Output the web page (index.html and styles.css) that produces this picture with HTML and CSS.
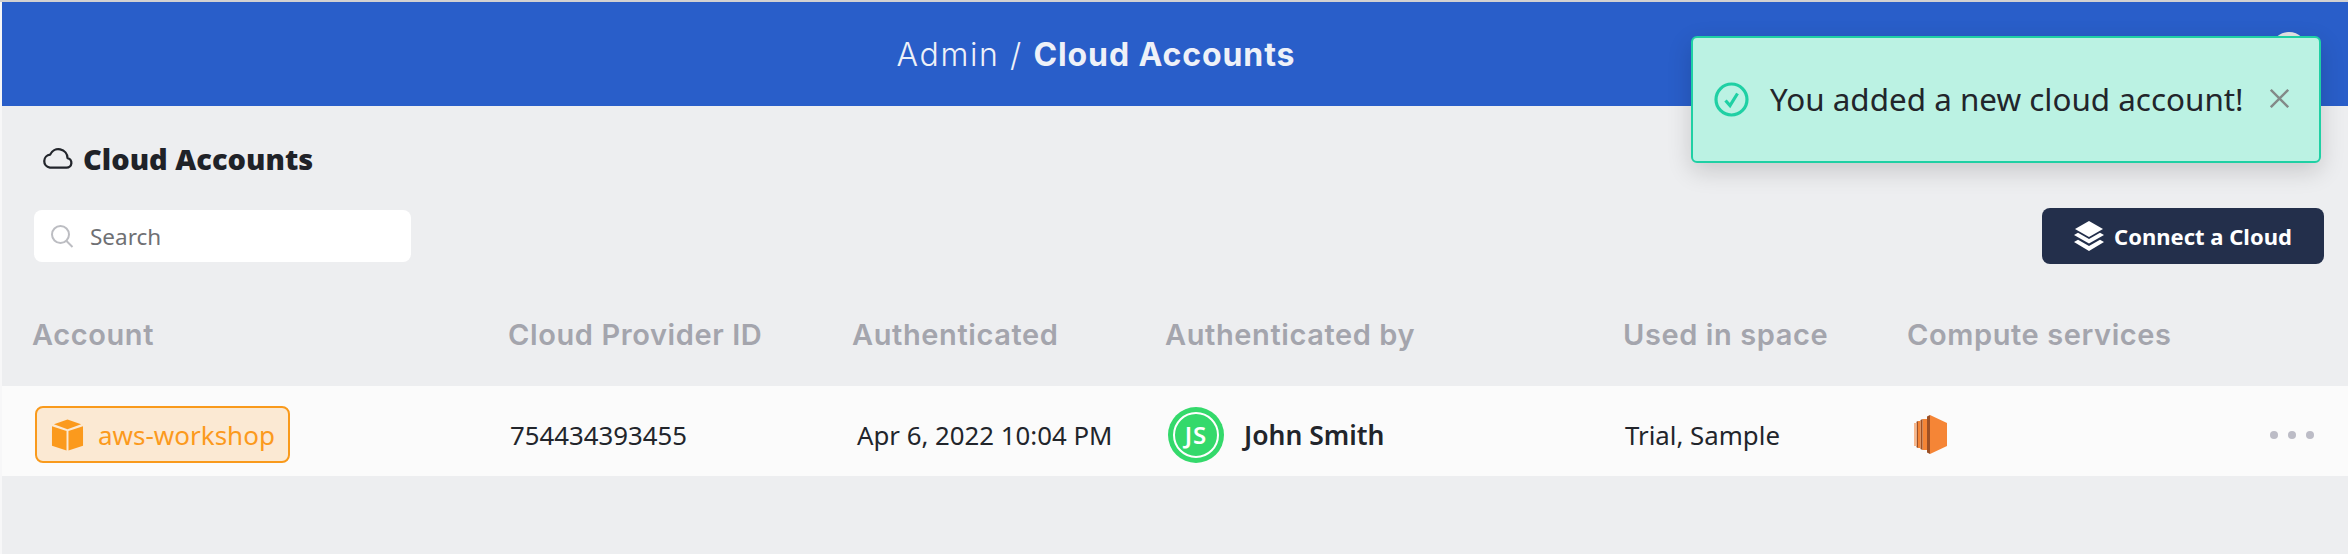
FILE: index.html
```html
<!DOCTYPE html>
<html lang="en">
<head>
    <meta charset="UTF-8">
    <title>Cloud Accounts</title>
    <link rel="stylesheet" href="styles.css">
</head>
<body>
    <header class="topbar">
        <div class="breadcrumb">Admin / <strong>Cloud Accounts</strong></div>
        <div class="user-dot"></div>
    </header>

    <main class="content">
        <h1 class="page-title">
            <svg class="cloud-icon" viewBox="0 0 32 23" fill="none" stroke="#22252b" stroke-width="2.4" stroke-linejoin="round"><path d="M8 21.500h17.500a5 5 0 0 0 1-9.900A9.500 9.500 0 0 0 8.300 8 6.800 6.800 0 0 0 8 21.500z"/></svg>
            Cloud Accounts
        </h1>

        <div class="toolbar">
            <div class="search">
                <svg class="search-icon" viewBox="0 0 24 24" fill="none" stroke="#bcbdc2" stroke-width="2"><circle cx="10.500" cy="10.500" r="8.500"/><path d="M16.500 17l6 6"/></svg>
                <span>Search</span>
            </div>
            <button class="connect">
                <svg class="stack-icon" viewBox="0 0 30 30" fill="#fff"><path d="M15 0l14 8-14 8-14-8z"/><path d="M0 14l4-2.300 11 6.300 11-6.300 4 2.300-15 8.500z"/><path d="M0 21l4-2.300 11 6.300 11-6.300 4 2.300-15 9z"/></svg>
                Connect a Cloud
            </button>
        </div>

        <div class="table-row table-head">
            <div class="col-account">Account</div>
            <div class="col-id">Cloud Provider ID</div>
            <div class="col-auth">Authenticated</div>
            <div class="col-by">Authenticated by</div>
            <div class="col-space">Used in space</div>
            <div class="col-compute">Compute services</div>
        </div>

        <div class="table-row table-body">
            <div class="col-account">
                <span class="account-tag">
                    <svg class="box-icon" viewBox="0 0 34 32" fill="#fb9a1d"><path d="M17 0l14 5-14 5L3 5z"/><path d="M1 7l15 5v20L1 27z"/><path d="M33 7l-15 5v20l15-5z"/></svg>
                    aws-workshop
                </span>
            </div>
            <div class="col-id">754434393455</div>
            <div class="col-auth">Apr 6, 2022 10:04 PM</div>
            <div class="col-by user">
                <span class="avatar"><span>JS</span></span>
                <b>John Smith</b>
            </div>
            <div class="col-space">Trial, Sample</div>
            <div class="col-compute">
                <svg class="ec2-icon" viewBox="0 0 33 39">
                    <path fill="#f58536" d="M16 0l17 8v23l-17 8z"/>
                    <path fill="#9d5025" d="M13 1.500L16 0v39l-3-1.500z"/>
                    <path fill="#f58536" d="M8.500 4h4.500v31H8.500z"/>
                    <path fill="#9d5025" d="M8.500 4l-2 1v29l2 1z"/>
                    <path fill="#f58536" d="M4 6h2.500v27H4z"/>
                    <path fill="#9d5025" d="M4 6l-1.500 .7v25.600L4 33z"/>
                    <path fill="#f9b88c" d="M0 8h2.500v23H0z"/>
                </svg>
            </div>
            <div class="row-menu"><i></i><i></i><i></i></div>
        </div>
    </main>

    <div class="toast">
        <svg class="check-icon" viewBox="0 0 35 35" fill="none" stroke="#1fd0a4" stroke-width="3.200"><circle cx="17.500" cy="17.500" r="15.500"/><path d="M11.500 18.500l4.500 5 7.500-12"/></svg>
        <span class="toast-text">You added a new cloud account!</span>
        <svg class="close-icon" viewBox="0 0 19 19" stroke="#838a88" stroke-width="2.400"><path d="M.8 .8l17.400 17.400M18.200 .8L.8 18.200"/></svg>
    </div>
</body>
</html>
```
FILE: styles.css
```css
html, body {
    height: 100%;
}

body {
    margin: 0;
    padding-left: 2px;
    box-sizing: border-box;
    border-top: 2px solid #d2d1d1;
    background: #f7f7f8;
    font-family: "Noto Sans", sans-serif;
    color: #22252b;
    overflow: hidden;
    display: flex;
    flex-direction: column;
}

.topbar {
    height: 104px;
    flex: none;
    box-sizing: border-box;
    padding-right: 158px;
    background: #295ec9;
    display: flex;
    align-items: center;
    justify-content: center;
    position: relative;
}

.breadcrumb {
    font-family: "Inter", sans-serif;
    font-size: 32px;
    font-weight: 300;
    letter-spacing: 1.6px;
    color: #eef1f8;
}

.breadcrumb strong {
    font-weight: 700;
    letter-spacing: 0.9px;
}

.user-dot {
    position: absolute;
    top: 30px;
    right: 41px;
    width: 36px;
    height: 36px;
    border-radius: 50%;
    background: #e6e6e6;
}

.content {
    flex: 1;
    background: #edeef0;
    padding-top: 34px;
}

.page-title {
    display: flex;
    align-items: center;
    gap: 10px;
    margin: 0 0 0 40px;
    font-size: 29px;
    font-weight: 900;
    line-height: 38px;
    color: #1f2228;
}

.cloud-icon {
    width: 31px;
    height: 22px;
    margin-top: -3px;
}

.toolbar {
    display: flex;
    justify-content: space-between;
    align-items: center;
    margin: 30px 24px 0 32px;
    height: 56px;
}

.search {
    width: 377px;
    height: 52px;
    box-sizing: border-box;
    background: #fff;
    border-radius: 8px;
    display: flex;
    align-items: center;
    gap: 16px;
    padding-left: 16px;
    font-size: 22.500px;
    color: #6f7074;
}

.search-icon {
    width: 24px;
    height: 24px;
}

.connect {
    width: 282px;
    height: 56px;
    border: none;
    border-radius: 8px;
    background: #232f4b;
    color: #fff;
    font-family: inherit;
    font-size: 22px;
    font-weight: 700;
    display: flex;
    align-items: center;
    justify-content: center;
    gap: 10px;
}

.stack-icon {
    width: 30px;
    height: 30px;
}

.table-row {
    display: flex;
    align-items: center;
}

.table-head {
    margin-top: 46px;
    height: 48px;
    font-family: "Inter", sans-serif;
    font-size: 29px;
    font-weight: 600;
    letter-spacing: 0.6px;
    color: #a4a5ad;
}

.table-body {
    margin-top: 28px;
    height: 90px;
    box-sizing: border-box;
    padding-top: 7px;
    background: #fbfbfb;
    font-size: 25.800px;
    position: relative;
}

.col-account { width: 506px; padding-left: 30px; box-sizing: border-box; flex: none; }
.col-id { width: 344px; box-sizing: border-box; flex: none; }
.col-auth { width: 313px; box-sizing: border-box; flex: none; }
.col-by { width: 458px; box-sizing: border-box; flex: none; }
.col-space { width: 284px; box-sizing: border-box; flex: none; }
.col-compute { flex: none; }

.table-body .col-account { display: flex; }
.table-body .col-id { padding-left: 2px; }
.table-body .col-auth { padding-left: 5px; }
.table-body .col-by { padding-left: 3px; }
.table-body .col-space { padding-left: 2px; }
.table-body .col-compute { padding-left: 7px; }

.account-tag {
    display: flex;
    align-items: center;
    gap: 14px;
    width: 255px;
    height: 57px;
    margin-left: 3px;
    box-sizing: border-box;
    padding-left: 14px;
    border: 2px solid #f99a1c;
    border-radius: 8px;
    background: #fbe9d3;
    color: #fb9a1d;
    font-size: 26px;
}

.box-icon {
    width: 33px;
    height: 32px;
}

.user {
    display: flex;
    align-items: center;
    gap: 20px;
}

.user b {
    font-size: 26.500px;
    font-weight: 600;
}

.avatar {
    width: 56px;
    height: 56px;
    border-radius: 50%;
    background: #34d96b;
    display: flex;
    align-items: center;
    justify-content: center;
    font-size: 24px;
    font-weight: 600;
    letter-spacing: 1px;
    color: #fff;
}

.avatar span {
    width: 46px;
    height: 46px;
    border: 2px solid #fff;
    border-radius: 50%;
    box-sizing: border-box;
    display: flex;
    align-items: center;
    justify-content: center;
}

.ec2-icon {
    display: block;
    width: 33px;
    height: 39px;
}

.row-menu {
    position: absolute;
    right: 34px;
    top: 7px;
    bottom: 0;
    display: flex;
    align-items: center;
    gap: 10px;
}

.row-menu i {
    width: 8px;
    height: 8px;
    border-radius: 50%;
    background: #bcbcc6;
}

.toast {
    position: absolute;
    right: 27px;
    top: 36px;
    width: 630px;
    height: 127px;
    box-sizing: border-box;
    border: 2px solid #1fd0a4;
    border-radius: 6px;
    padding: 0 0 2px 21px;
    background: #bbf2e3;
    box-shadow: 0 8px 24px rgba(0, 0, 0, 0.16);
    display: flex;
    align-items: center;
}

.check-icon {
    width: 35px;
    height: 35px;
    margin-top: 2px;
    flex: none;
}

.toast-text {
    margin-left: 21px;
    font-size: 31.400px;
    color: #22252b;
}

.close-icon {
    width: 19px;
    height: 19px;
    margin-left: 26px;
    flex: none;
}
```
